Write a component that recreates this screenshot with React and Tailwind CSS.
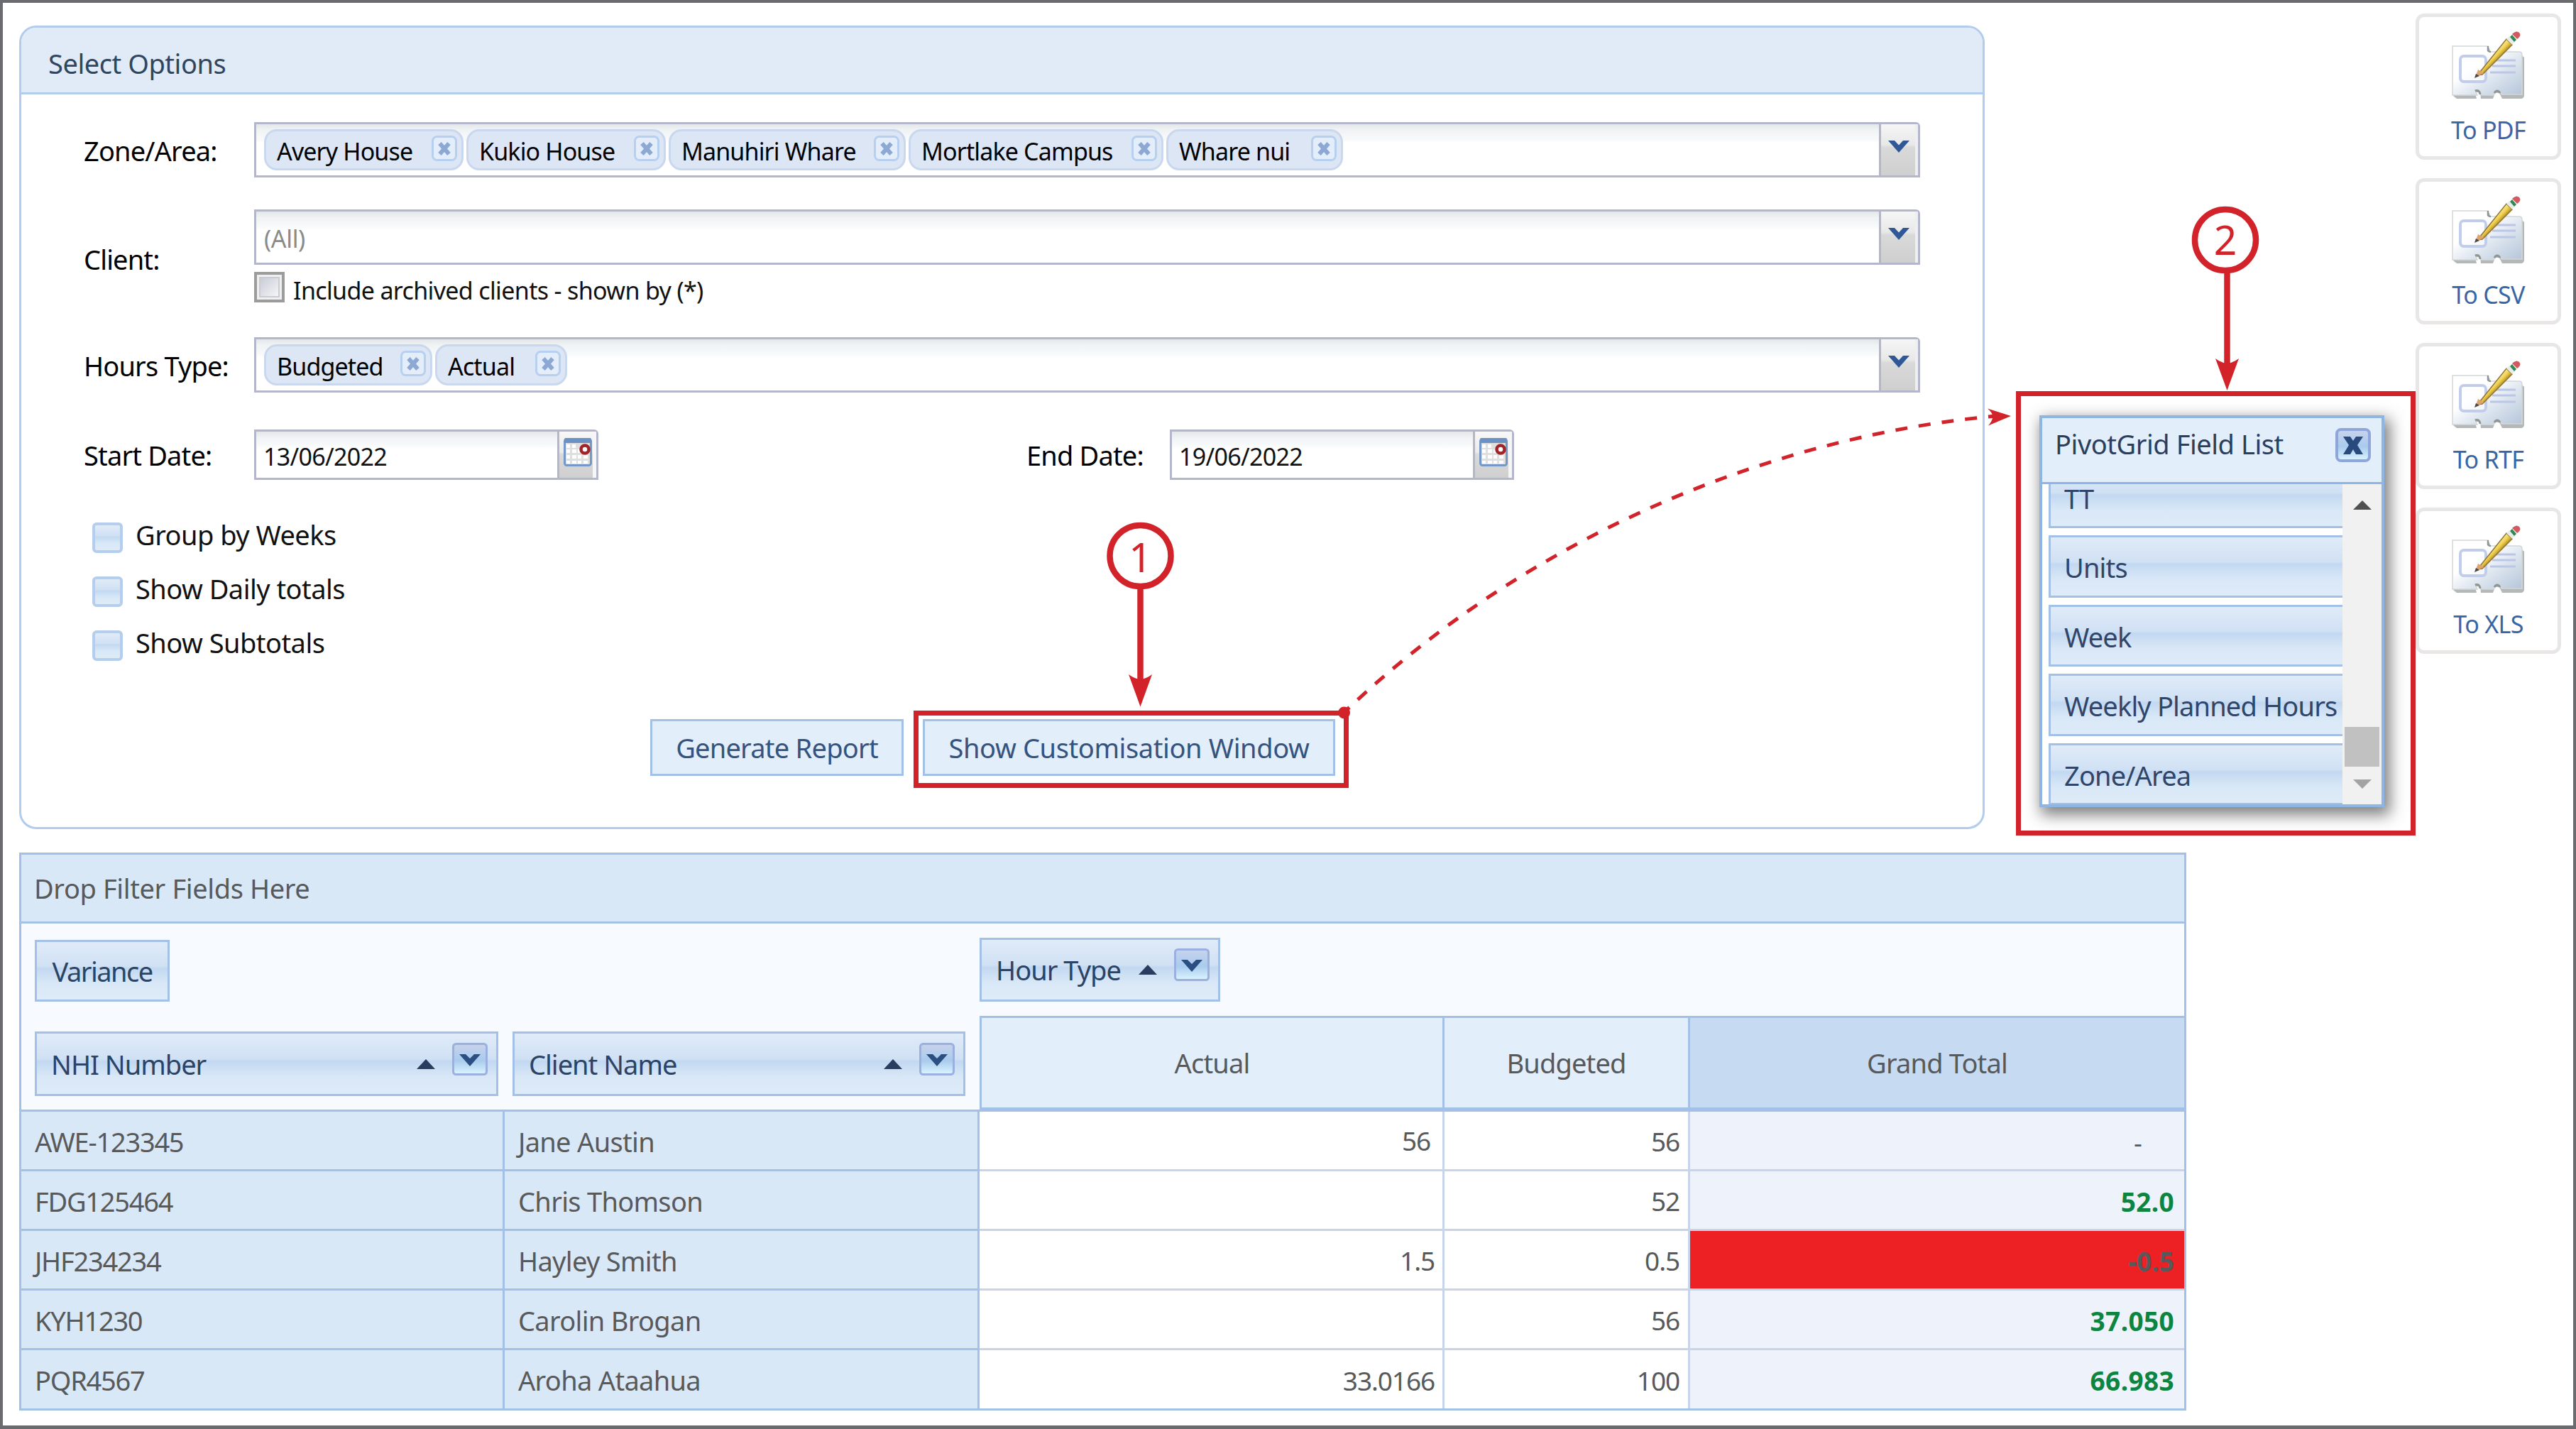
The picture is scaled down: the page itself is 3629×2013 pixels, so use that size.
import React from "react";
import clsx from "clsx";

const zones = [
  { name: "Avery House", width: "w-[281px]" },
  { name: "Kukio House", width: "w-[281px]" },
  { name: "Manuhiri Whare", width: "w-[334px]" },
  { name: "Mortlake Campus", width: "w-[359px]" },
  { name: "Whare nui", width: "w-[249px]" },
];

const hourTypes = [
  { name: "Budgeted", width: "w-[237px]" },
  { name: "Actual", width: "w-[186px]" },
];

const options = ["Group by Weeks", "Show Daily totals", "Show Subtotals"];

const fields = ["TT", "Units", "Week", "Weekly Planned Hours", "Zone/Area"];

const exportFormats = ["To PDF", "To CSV", "To RTF", "To XLS"];

const rows = [
  { nhi: "AWE-123345", client: "Jane Austin", actual: "56", budgeted: "56", total: "-", state: "none" },
  { nhi: "FDG125464", client: "Chris Thomson", actual: "", budgeted: "52", total: "52.0", state: "over" },
  { nhi: "JHF234234", client: "Hayley Smith", actual: "1.5", budgeted: "0.5", total: "-0.5", state: "under" },
  { nhi: "KYH1230", client: "Carolin Brogan", actual: "", budgeted: "56", total: "37.050", state: "over" },
  { nhi: "PQR4567", client: "Aroha Ataahua", actual: "33.0166", budgeted: "100", total: "66.983", state: "over" },
];

const glossy =
  "bg-[linear-gradient(to_bottom,#e0ebf8_0%,#d0e1f4_42%,#c2d8f1_46%,#d9e8f7_72%,#deebf8_100%)]";

const Chip = ({ name, width }) => (
  <div
    className={clsx(
      "flex h-[58px] shrink-0 items-center justify-between rounded-[18px] border-[3px] border-[#c9d8ef] bg-[#dde6f5] pr-[6px] pl-[15px]",
      width
    )}
  >
    <span className="pt-[3px] text-[34px] tracking-[-0.025em] text-black">{name}</span>
    <svg className="-mt-1 shrink-0" width="36" height="36" viewBox="0 0 36 36">
      <rect x="1.5" y="1.5" width="33" height="33" rx="6" fill="#e3eefa" stroke="#b8d0ef" strokeWidth="3" />
      <path d="M11.5 11 L24.5 26 M24.5 11 L11.5 26" stroke="#8da9d3" strokeWidth="6" />
    </svg>
  </div>
);

const ComboBox = ({ children }) => (
  <div className="flex h-[78px] w-[2347px] rounded-tr-[6px] border-[3px] border-[#b4b7cb] bg-white">
    <div className="flex flex-1 items-center gap-1 bg-[linear-gradient(to_bottom,#e3e7e9_0px,#f0f3f3_8px,#f8fafb_22px,#ffffff_26px)] pl-[11px]">
      {children}
    </div>
    <div className="flex w-[55px] justify-center border-l-[3px] border-[#b4b7cb] bg-[linear-gradient(to_bottom,#f6f6f6_0%,#e8e8e8_40%,#d9d9d9_46%,#cfcfcf_100%)] pr-[2px] shadow-[inset_-4px_0_0_#efeff1]">
      <svg className="mt-[21px]" width="30" height="20" viewBox="0 0 30 20">
        <path d="M0 2 H9 L15 8.5 L21 2 H30 L15 19 Z" fill="#305796" />
      </svg>
    </div>
  </div>
);

const DateBox = ({ value }) => (
  <div className="flex h-[71px] w-[485px] rounded-tr-[6px] border-[3px] border-[#b4b7cb] bg-white">
    <div className="flex flex-1 items-center bg-[linear-gradient(to_bottom,#e3e7e9_0px,#f0f3f3_8px,#f8fafb_20px,#ffffff_24px)] pt-1 pl-[10px] text-[34px] tracking-[-0.02em]">
      {value}
    </div>
    <div className="w-[55px] border-l-[3px] border-[#b4b7cb] bg-[linear-gradient(to_bottom,#f8f8f8_0%,#ebebeb_44%,#dadada_50%,#cfcfcf_100%)] pt-[9px] pl-[6px] shadow-[inset_-5px_0_0_#f6f6f8]">
      <svg width="40" height="40" viewBox="0 0 40 40">
        <rect x="1.5" y="1.5" width="37" height="37" rx="3" fill="#dfdfdf" stroke="#7598c6" strokeWidth="3" />
        <rect x="1" y="0" width="38" height="7" rx="2" fill="#6c91c4" />
        <g fill="#ffffff">
          <rect x="4" y="9" width="5" height="5" />
          <rect x="12" y="9" width="5" height="5" />
          <rect x="4" y="16" width="5" height="5" />
          <rect x="12" y="16" width="6" height="5" />
          <rect x="20" y="16" width="5" height="5" />
          <rect x="4" y="24" width="5" height="5" />
          <rect x="12" y="24" width="6" height="5" />
          <rect x="20" y="24" width="5" height="5" />
          <rect x="28" y="24" width="6" height="5" />
          <rect x="4" y="32" width="5" height="4" />
          <rect x="12" y="32" width="6" height="4" />
          <rect x="20" y="32" width="5" height="4" />
          <rect x="28" y="32" width="6" height="4" />
        </g>
        <circle cx="30" cy="16" r="5.5" fill="#ffffff" stroke="#a32327" strokeWidth="4.5" />
      </svg>
    </div>
  </div>
);

const ExportIcon = () => (
  <svg width="106" height="98" viewBox="0 0 106 98">
    <defs>
      <linearGradient id="card" x1="0" y1="0" x2="1" y2="1">
        <stop offset="0.35" stopColor="#ffffff" />
        <stop offset="0.6" stopColor="#dfe7f0" />
        <stop offset="1" stopColor="#b4c5d9" />
      </linearGradient>
      <linearGradient id="pencil" x1="0" y1="0" x2="1" y2="1">
        <stop offset="0.4" stopColor="#f9f0a5" />
        <stop offset="0.5" stopColor="#f0d24e" />
        <stop offset="0.6" stopColor="#a87c25" />
      </linearGradient>
    </defs>
    <path
      d="M5 25 H54 L56 33 H98 L103 38 V91 Q103 96 98 96 H72 L68 88 L62 88 L59 96 H42 L41 86 L34 88 L36 96 H8 L3 92 Z"
      fill="#b4b8b8"
    />
    <path
      d="M2 22 H52 V28 Q53 30 56 30 H96 Q100 30 100 34 V90 H71 Q70 84 65 84 Q60 84 60 91 H43 Q42 83 34 84 L37 91 H2 Z"
      fill="url(#card)"
      stroke="#d3d7d8"
      strokeWidth="1.5"
    />
    <path d="M52 22 V28 Q53 30 56 30" fill="none" stroke="#8f9494" strokeWidth="2.5" />
    <path d="M34 85 Q40 83 41 90 M61 88 Q65 82 69 88" fill="none" stroke="#8f9494" strokeWidth="3" />
    <rect x="13" y="36" width="36" height="36" rx="5" fill="#ffffff" fillOpacity="0.6" stroke="#c1cdea" strokeWidth="4" />
    <path d="M63 42 H91 M58 50 H91 M55 59 H91" stroke="#bcc6e6" strokeWidth="3" />
    <path d="M37 63 L78 12 L86 20 L44 62 Z" fill="url(#pencil)" stroke="#8f742f" strokeWidth="1.5" />
    <path d="M34 66 L38 55 L46 60 Z" fill="#dfa46d" />
    <path d="M33 67 L35 61 L40 64 Z" fill="#4f4542" />
    <path d="M78 12 L82 8 L90 16 L86 20 Z" fill="#e6ece8" />
    <path d="M83 9 L86 6 L92 13 L89 16 Z" fill="#2f8753" />
    <path d="M86 5 Q92 -1 96 3 Q100 7 93 12 Z" fill="#d25a60" />
  </svg>
);

const SortArrow = () => (
  <svg width="26" height="14" viewBox="0 0 26 14">
    <path d="M13 0 L26 14 H0 Z" fill="#283d5f" />
  </svg>
);

const FilterButton = () => (
  <svg width="50" height="46" viewBox="0 0 50 46">
    <defs>
      <linearGradient id="filter" x1="0" y1="0" x2="0" y2="1">
        <stop offset="0" stopColor="#c9d3ed" />
        <stop offset="0.55" stopColor="#a9cbed" />
        <stop offset="1" stopColor="#dcf5ff" />
      </linearGradient>
    </defs>
    <rect x="1.5" y="1.5" width="47" height="43" rx="4" fill="url(#filter)" stroke="#9bb0df" strokeWidth="3" />
    <path d="M10 16 H19 L25 22 L31 16 H40 L25 33 Z" fill="#2b4f82" />
  </svg>
);

const HeaderField = ({ name, className }) => (
  <div className={clsx("flex items-center border-[3px] border-[#a3c0e6] pl-5 text-[#2b4364]", glossy, className)}>
    <span className="flex-1 tracking-[-0.026em] whitespace-nowrap">{name}</span>
    <SortArrow />
    <div className="-mt-[14px] ml-6">
      <FilterButton />
    </div>
  </div>
);

const Label = ({ children, className = "w-[240px]" }) => (
  <div className={clsx("shrink-0 text-[38px] tracking-[-0.022em] whitespace-nowrap text-black", className)}>
    {children}
  </div>
);

const OptionsPanel = () => (
  <div className="h-[1132px] w-[2769px] overflow-hidden rounded-[24px] border-[3px] border-[#b1ccec] bg-white">
    <div className="flex h-[94px] items-center border-b-[3px] border-[#b1ccec] bg-[#e0ebf7] pt-[9px] pl-[38px] tracking-[-0.012em] text-[#2f4560]">
      Select Options
    </div>
    <div className="flex flex-col pl-[88px]">
      <div className="mt-[39px] flex items-center">
        <Label className="w-[240px] pt-[2px]">Zone/Area:</Label>
        <ComboBox>
          {zones.map((zone) => (
            <Chip key={zone.name} {...zone} />
          ))}
        </ComboBox>
      </div>
      <div className="mt-[45px] flex items-center">
        <Label className="w-[240px] pt-2">Client:</Label>
        <div>
          <ComboBox>
            <span className="pt-1 text-[34px] tracking-[-0.01em] text-[#8a8a8a]">(All)</span>
          </ComboBox>
          <div className="mt-[10px] flex h-[43px] items-center">
            <div className="h-[43px] w-[43px] border-[4px] border-[#9c9c9c] bg-[#f0f0f0] p-[3px]">
              <div className="h-full w-full border-2 border-[#c9ccd2] bg-linear-to-br from-[#c9ccd8] to-[#f6f6f6]" />
            </div>
            <span className="pt-2 pl-[12px] text-[34px] tracking-[-0.019em]">
              Include archived clients - shown by (*)
            </span>
          </div>
        </div>
      </div>
      <div className="mt-[49px] flex items-center">
        <Label className="w-[240px] pt-[2px]">Hours Type:</Label>
        <ComboBox>
          {hourTypes.map((type) => (
            <Chip key={type.name} {...type} />
          ))}
        </ComboBox>
      </div>
      <div className="mt-[52px] flex items-center">
        <Label>Start Date:</Label>
        <DateBox value="13/06/2022" />
        <Label className="ml-[603px] w-[202px]">End Date:</Label>
        <DateBox value="19/06/2022" />
      </div>
      <div className="mt-[60px] flex flex-col gap-[33px] pl-3">
        {options.map((option) => (
          <div key={option} className="flex h-[43px] items-center">
            <div className={clsx("h-[43px] w-[43px] rounded-[6px] border-[4px] border-[#b5ceee]", glossy)} />
            <span className="-mt-[9px] pl-[18px] tracking-[-0.014em]">{option}</span>
          </div>
        ))}
      </div>
      <div className="mt-[70px] ml-[798px] flex items-start text-[#35537f]">
        <button className="mt-3 mr-[14px] h-20 w-[357px] border-[3px] border-[#a3c0e6] bg-[#e2eefa] tracking-[-0.02em]">
          Generate Report
        </button>
        <div className="h-[109px] w-[613px] border-[7px] border-[#d2232a] pt-[5px] pl-[6px]">
          <button className="h-20 w-[581px] border-[3px] border-[#a3c0e6] bg-[#e2eefa] tracking-[-0.01em]">
            Show Customisation Window
          </button>
        </div>
      </div>
    </div>
  </div>
);

const PivotGrid = () => (
  <div className="mt-[33px] w-[3053px] border-[3px] border-[#a3c0e6] text-[#58595b]">
    <div className="flex h-[97px] items-center border-b-[3px] border-[#a3c0e6] bg-[#d8e8f7] pl-[18px] tracking-[-0.01em]">
      Drop Filter Fields Here
    </div>
    <div className="flex h-[262px] bg-[#f7fbff]">
      <div className="flex w-[1350px] flex-col pl-[19px]">
        <div
          className={clsx(
            "mt-[23px] flex h-[87px] w-[190px] items-center justify-center border-[3px] border-[#a3c0e6] tracking-[-0.04em] text-[#2b4364]",
            glossy
          )}
        >
          Variance
        </div>
        <div className="mt-[42px] flex gap-5">
          <HeaderField name="NHI Number" className="h-[91px] w-[653px] pr-3" />
          <HeaderField name="Client Name" className="h-[91px] w-[638px] pr-3" />
        </div>
      </div>
      <div className="flex flex-1 flex-col">
        <HeaderField name="Hour Type" className="mt-5 h-[90px] w-[339px] pr-[12px]" />
        <div className="mt-5 flex h-[132px] border-y-[3px] border-l-[3px] border-[#a3c0e6] bg-[#e2eefa] tracking-[-0.022em]">
          <div className="flex w-[652px] items-center justify-center border-r-[3px] border-[#a3c0e6]">Actual</div>
          <div className="flex w-[346px] items-center justify-center border-r-[3px] border-[#a3c0e6]">Budgeted</div>
          <div className="flex flex-1 items-center justify-center bg-[#c6daf2]">Grand Total</div>
        </div>
      </div>
    </div>
    <div className="flex flex-col border-t-[3px] border-[#a3c0e6]">
      {rows.map((row, index) => {
        const last = index === rows.length - 1;
        return (
          <div key={row.nhi} className={clsx("flex", last ? "h-[82px]" : "h-[84px]")}>
            <div
              className={clsx(
                "flex w-[681px] items-center border-r-[3px] border-[#a3c0e6] bg-[#d8e8f7] pt-[2px] pl-[19px] tracking-[-0.033em]",
                !last && "border-b-[3px]"
              )}
            >
              {row.nhi}
            </div>
            <div
              className={clsx(
                "flex w-[669px] items-center border-r-[3px] border-[#a3c0e6] bg-[#d8e8f7] pt-[2px] pl-[19px] tracking-[-0.018em]",
                !last && "border-b-[3px]"
              )}
            >
              {row.client}
            </div>
            <div
              className={clsx(
                "flex w-[655px] items-center justify-end border-r-[3px] border-[#c8d4ea] bg-white text-[37px] tracking-[-0.03em]",
                index === 0 ? "pr-[17px]" : "pt-[2px] pr-[11px]",
                !last && "border-b-[3px]"
              )}
            >
              {row.actual}
            </div>
            <div
              className={clsx(
                "flex w-[346px] items-center justify-end border-r-[3px] border-[#c8d4ea] bg-white pt-[2px] pr-[12px] text-[37px] tracking-[-0.03em]",
                !last && "border-b-[3px]"
              )}
            >
              {row.budgeted}
            </div>
            <div
              className={clsx(
                "flex flex-1 items-center justify-end border-[#c8d4ea] pt-[3px] text-[37px]",
                !last && "border-b-[3px]",
                row.state === "none" && "bg-[#eef3fb] pr-[59px]",
                row.state === "over" && "bg-[#eef3fb] pr-[14px] font-bold tracking-[0.01em] text-[#0c8541]",
                row.state === "under" && "bg-[#ed2024] pr-[14px] font-bold"
              )}
            >
              {row.total}
            </div>
          </div>
        );
      })}
    </div>
  </div>
);

const FieldList = () => (
  <div className="absolute top-[547px] left-[2836px] h-[626px] w-[563px] border-[7px] border-[#d2232a] pt-[27px] pl-[26px]">
    <div className="h-[552px] w-[486px] border-4 border-[#8fb5e5] bg-white shadow-[5px_8px_20px_3px_rgba(0,0,0,0.5)]">
      <div className="flex h-[93px] items-center justify-between border-b-[3px] border-[#8fb5e5] bg-[#e2eefa] pr-[15px] pb-[14px] pl-[18px] tracking-[-0.012em] text-[#2b3f5c]">
        <span className="-mt-1">PivotGrid Field List</span>
        <svg width="50" height="48" viewBox="0 0 50 48">
          <rect x="2" y="2" width="46" height="44" rx="6" fill="url(#filter)" stroke="#8fa6db" strokeWidth="4" />
          <path d="M11 12 H21 L25 18 L29 12 H39 L31 24 L39 37 H29 L25 30 L21 37 H11 L19 24 Z" fill="#284a7c" />
        </svg>
      </div>
      <div className="flex h-[451px] overflow-hidden">
        <div className="-mb-px flex flex-1 flex-col justify-end gap-[10px] overflow-hidden pl-[9px]">
          {fields.map((field) => (
            <div
              key={field}
              className={clsx(
                "flex h-[87.5px] shrink-0 items-center border-[3px] border-r-0 border-[#a3c0e6] pt-[3px] pl-[19px] tracking-[-0.022em] whitespace-nowrap text-[#2f4569]",
                glossy
              )}
            >
              {field}
            </div>
          ))}
        </div>
        <div className="flex w-[55px] flex-col items-center bg-[#f1f1f1]">
          <svg className="mt-[23px]" width="26" height="13" viewBox="0 0 26 13">
            <path d="M13 0 L26 13 H0 Z" fill="#505050" />
          </svg>
          <div className="mt-[306px] h-[56px] w-[49px] bg-[#c1c1c1]" />
          <svg className="mt-[18px]" width="26" height="13" viewBox="0 0 26 13">
            <path d="M0 0 H26 L13 13 Z" fill="#a3a3a3" />
          </svg>
        </div>
      </div>
    </div>
  </div>
);

// Numbered steps and arrows drawn over the page
const Annotations = () => (
  <svg className="pointer-events-none absolute -top-1 -left-1" width="3629" height="2013" viewBox="0 0 3629 2013">
    <g fill="none" stroke="#d2232a">
      <circle cx="1606.5" cy="783" r="43" strokeWidth="8.5" />
      <path d="M1606.5 828 V962" strokeWidth="8.5" />
      <circle cx="3135" cy="338" r="43" strokeWidth="8.5" />
      <path d="M3137.5 383 V516" strokeWidth="8.5" />
      <path d="M1893 1004 C2170 740 2520 612 2812 586" strokeWidth="5" strokeDasharray="17 16" strokeDashoffset="6" />
    </g>
    <g fill="#d2232a">
      <path d="M1606.5 995.5 L1590 950 Q1598 956 1606.5 957 Q1615 956 1623 950 Z" />
      <path d="M3137.5 550 L3121 505 Q3129 511 3137.5 512 Q3146 511 3154 505 Z" />
      <path d="M2833 586 L2800 575.5 Q2807 581 2807.5 587.5 Q2806 594 2801 599.5 Z" />
      <circle cx="1893.5" cy="1004" r="8.5" />
      <text x="1606.5" y="806" fontSize="57" textAnchor="middle">
        1
      </text>
      <text x="3135" y="359" fontSize="57" textAnchor="middle">
        2
      </text>
    </g>
  </svg>
);

const App = () => {
  return (
    <div className="relative flex h-[2013px] w-[3629px] overflow-hidden border-4 border-b-[5px] border-[#6a6b6f] bg-white font-['Noto_Sans','Open_Sans',sans-serif] text-[38px] leading-none text-[#111111]">
      <div className="flex flex-1 flex-col pt-8 pl-[23px]">
        <OptionsPanel />
        <PivotGrid />
      </div>
      <div className="flex w-[222px] flex-col gap-[26px] pt-[15px]">
        {exportFormats.map((format) => (
          <div
            key={format}
            className="flex h-[206px] w-[205px] flex-col items-center rounded-[12px] border-[5px] border-[#e9e6e6] bg-white pt-[19px]"
          >
            <ExportIcon />
            <span className="mt-[25px] text-[34px] tracking-[-0.02em] text-[#3866a5]">{format}</span>
          </div>
        ))}
      </div>
      <FieldList />
      <Annotations />
    </div>
  );
};

export default App;
